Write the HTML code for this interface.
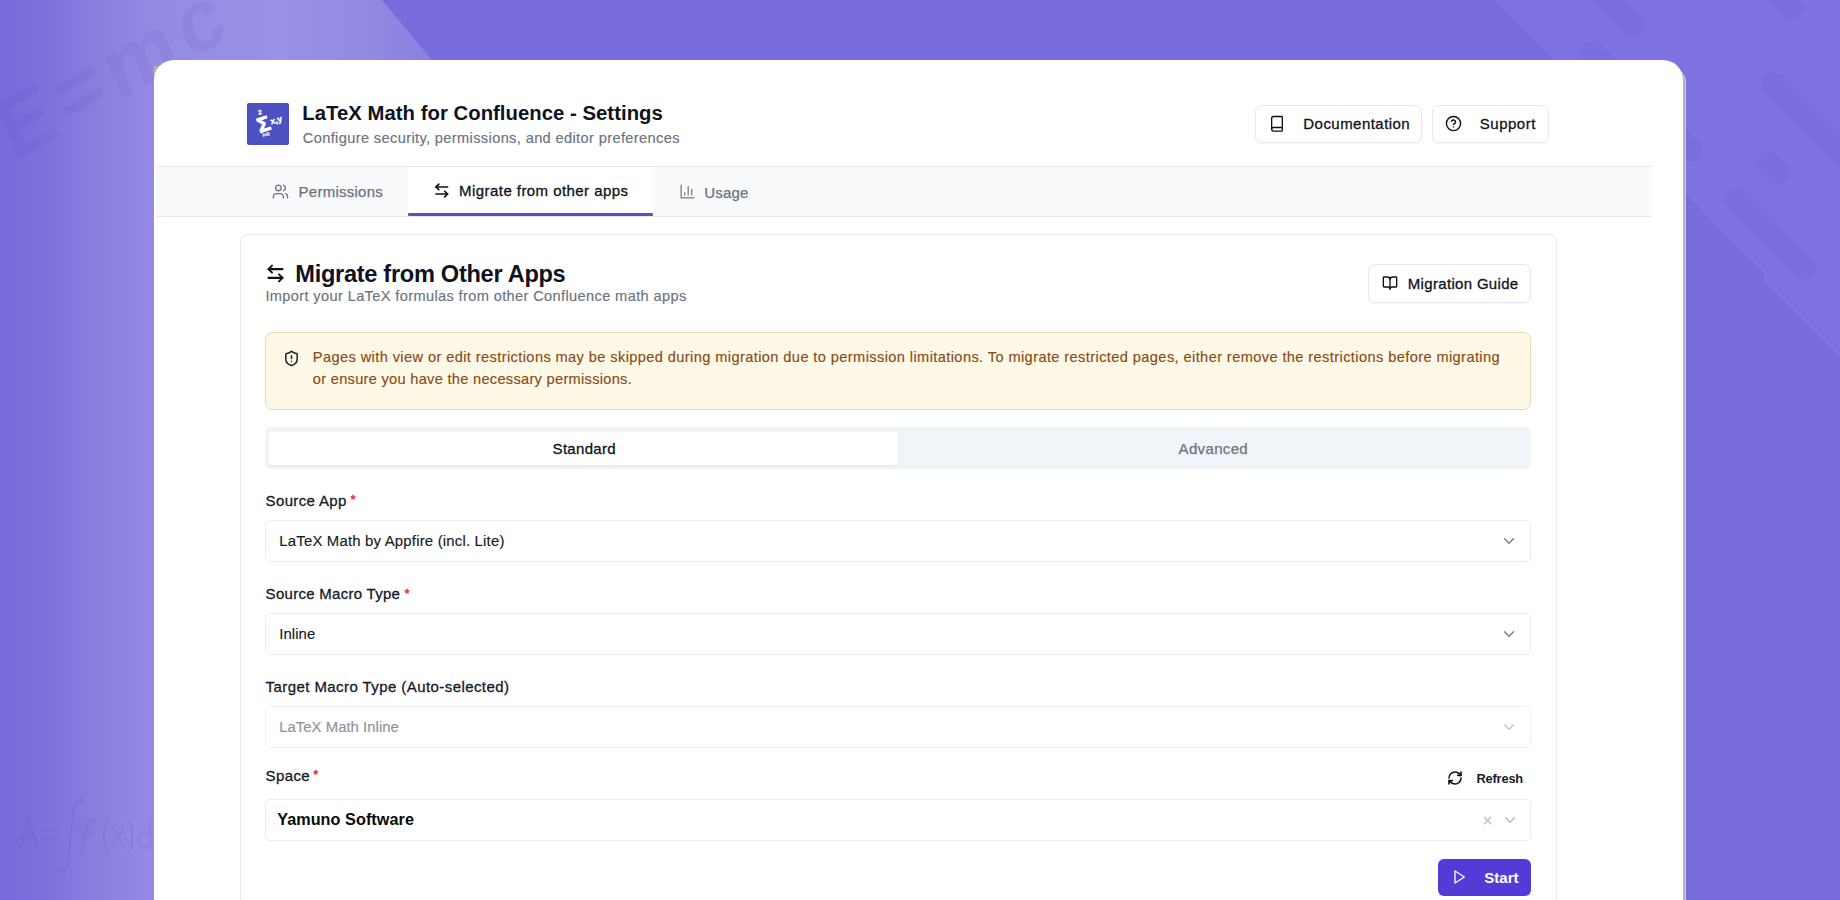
<!DOCTYPE html>
<html><head><meta charset="utf-8"><title>LaTeX Math for Confluence - Settings</title>
<style>
html,body{margin:0;padding:0;width:1840px;height:900px;overflow:hidden}
body{position:relative;background:#786bdb;font-family:"Liberation Sans",sans-serif}
.t{position:absolute;white-space:nowrap}
.ic{position:absolute;fill:none;stroke-linecap:round;stroke-linejoin:round;overflow:visible}
.btn{position:absolute;border:1px solid #e6e8ec;border-radius:7px;box-sizing:border-box;background:#fff;box-shadow:0 1px 1px rgba(0,0,0,0.03)}
.logo{position:absolute;left:247px;top:103px;width:42px;height:42px;background:#4d50c1;border-radius:2px;overflow:hidden}
.card{position:absolute;left:154px;top:60px;width:1529px;height:900px;background:#fff;border-radius:20px}
.edge{position:absolute;left:1680px;top:60px;width:6px;height:900px;border-radius:0 20px 0 0;background:linear-gradient(90deg,#fff 0,#fff 2.5px,#b3b3b6 2.5px,#b3b3b6 4.6px,#c6c2e6 4.6px,#c6c2e6 6px)}
</style></head><body>
<div id="bg" style="position:absolute;left:0;top:0;width:1840px;height:900px;overflow:hidden">
  <div style="position:absolute;left:0;top:0;width:1840px;height:900px;clip-path:polygon(0 0,382px 0,1129px 900px,0 900px);background:linear-gradient(90deg,#786bda 0,#7b6edb 30px,#958ae3 150px,#9a91e6 280px,#9289e2 370px,#8b80df 430px,#897ede 700px)"></div>
  <div style="position:absolute;left:0;top:0;width:1840px;height:900px;clip-path:polygon(1494px 0,1840px 0,1840px 350px);background:#7e73e1"></div>
  <svg style="position:absolute;left:0;top:0" width="1840" height="900" stroke-linecap="round" stroke-width="24" fill="none">
    <g stroke="#7a6ddc">
      <line x1="1560" y1="-50" x2="1634.5" y2="24.5"/>
      <line x1="1592.5" y1="52.5" x2="1690" y2="150"/>
      <line x1="1720" y1="-62" x2="1790" y2="8"/>
      <line x1="1774" y1="84" x2="1900" y2="210"/>
      <line x1="1769" y1="164" x2="1777" y2="172"/>
      <line x1="1738" y1="200" x2="1805" y2="267"/>
    </g>
    <line stroke="#7e73e1" x1="1775" y1="275" x2="1900" y2="400"/>
  </svg>
  <div class="t" style="left:12.6px;top:90.8px;font-size:84px;line-height:84px;font-weight:700;letter-spacing:8px;color:rgba(70,50,170,0.075);transform:rotate(-30deg) skewX(-8deg);transform-origin:0 71.1px">E=mc</div>
  <svg style="position:absolute;left:0;top:780px" width="160" height="110" fill="none" stroke="rgba(80,60,170,0.10)" stroke-width="2.2" stroke-linecap="round">
    <path d="M20 68 L29 38 L38 68 M23.5 57 H34.5"/>
    <path d="M42 50 H58 M42 58 H58"/>
    <path d="M83 22 C78 18 74 24 73 34 L68 80 C67 90 63 94 59 90"/>
    <text x="80" y="24" font-size="10" fill="rgba(80,60,170,0.10)" stroke="none" font-family="Liberation Sans">b</text>
    <text x="60" y="100" font-size="10" fill="rgba(80,60,170,0.10)" stroke="none" font-family="Liberation Sans">a</text>
    <path d="M95 42 C92 38 88 40 87 46 L82 72 M79 52 H92"/>
    <path d="M108 40 C102 48 102 64 108 72"/>
    <path d="M112 48 L124 66 M124 48 L112 66"/>
    <path d="M128 40 C134 48 134 64 128 72"/>
    <path d="M150 38 V68 M150 62 C146 70 138 68 139 60 C139 52 146 50 150 56"/>
  </svg>
</div>
<div class="card" style="width:1532px;top:68px;border-radius:0 14px 0 0;background:#c6c2e6"></div>
<div class="card" style="width:1530.6px;top:66px;border-radius:0 16px 0 0;background:#b3b3b6"></div>
<div class="card" style="width:1528.5px;background:#fff"></div>
<div class="logo"><svg width="42" height="42" viewBox="0 0 42 42"><g fill="#fff" stroke="#fff" font-family="Liberation Sans" font-weight="700" transform="translate(-1 -3.5)"><text x="10.5" y="31" font-size="21" stroke-width="0.9" transform="rotate(-18 20 22)">&#931;</text><text x="12" y="15" font-size="6.5" stroke-width="0.3" transform="rotate(-10 14 12)">2</text><text x="24" y="24" font-size="8.5" stroke-width="0.4" transform="rotate(-15 28 20)">x,y</text><text x="16.5" y="37" font-size="5" stroke-width="0.2" transform="rotate(-15 19 35)">i=0</text></g></svg></div>
<div class="t" style="left:302.30px;top:103.12px;font-size:20.3px;line-height:20.3px;font-weight:700;color:#0f1222;letter-spacing:0.040px;">LaTeX Math for Confluence - Settings</div>
<div class="t" style="left:302.80px;top:130.94px;font-size:14.6px;line-height:14.6px;font-weight:400;color:#6b7280;letter-spacing:0.371px;-webkit-text-stroke:0.15px #6b7280;">Configure security, permissions, and editor preferences</div>
<div class="btn" style="left:1255px;top:105px;width:167px;height:38px"></div>
<svg class="ic" style="left:1268.9px;top:114.6px" width="16" height="17.6" viewBox="0 0 24 24" preserveAspectRatio="none" stroke="#111" stroke-width="2.0"><path d="M4 19.5v-15A2.5 2.5 0 0 1 6.5 2H19a1 1 0 0 1 1 1v18a1 1 0 0 1-1 1H6.5a1 1 0 0 1 0-5H20"/></svg>
<div class="t" style="left:1303.30px;top:115.80px;font-size:15.0px;line-height:15.0px;font-weight:400;color:#0f1222;letter-spacing:0.459px;-webkit-text-stroke:0.3px #0f1222;">Documentation</div>
<div class="btn" style="left:1432px;top:105px;width:117px;height:38px"></div>
<svg class="ic" style="left:1445.1px;top:115px" width="17" height="17" viewBox="0 0 24 24" stroke="#111" stroke-width="2"><circle cx="12" cy="12" r="10"/><path d="M9.09 9a3 3 0 0 1 5.83 1c0 2-3 3-3 3"/><path d="M12 17h.01"/></svg>
<div class="t" style="left:1479.80px;top:115.80px;font-size:15.0px;line-height:15.0px;font-weight:400;color:#0f1222;letter-spacing:0.510px;-webkit-text-stroke:0.3px #0f1222;">Support</div>
<div style="position:absolute;left:156px;top:166px;width:1496px;height:51px;background:#f9fafb;border-top:1px solid #e7e8eb;border-bottom:1px solid #e7e8eb;box-sizing:border-box"></div>
<div style="position:absolute;left:408px;top:167px;width:245px;height:46px;background:#fff"></div>
<div style="position:absolute;left:408px;top:213px;width:245px;height:3px;background:#5a4fc8;border-radius:1px"></div>
<svg class="ic" style="left:271.8px;top:182.7px" width="17" height="17" viewBox="0 0 24 24" stroke="#6b7280" stroke-width="1.9"><path d="M16 21v-2a4 4 0 0 0-4-4H6a4 4 0 0 0-4 4v2"/><circle cx="9" cy="7" r="4"/><path d="M22 21v-2a4 4 0 0 0-3-3.87"/><path d="M16 3.13a4 4 0 0 1 0 7.75"/></svg>
<div class="t" style="left:298.60px;top:183.80px;font-size:15.0px;line-height:15.0px;font-weight:400;color:#6b7280;letter-spacing:0.251px;-webkit-text-stroke:0.25px #6b7280;">Permissions</div>
<svg class="ic" style="left:433.3px;top:182.2px" width="17.5" height="17" viewBox="0 0 24 24" preserveAspectRatio="none" stroke="#111" stroke-width="2.3"><path d="M8 3 4 7l4 4"/><path d="M4 7h16"/><path d="m16 21 4-4-4-4"/><path d="M20 17H4"/></svg>
<div class="t" style="left:459.10px;top:183.40px;font-size:15.0px;line-height:15.0px;font-weight:400;color:#0f1222;letter-spacing:0.439px;-webkit-text-stroke:0.3px #0f1222;">Migrate from other apps</div>
<svg class="ic" style="left:678.5px;top:182.6px" width="17" height="17" viewBox="0 0 24 24" stroke="#707680" stroke-width="1.7"><path d="M3 3v18h18"/><path d="M18 17V9"/><path d="M13 17V5"/><path d="M8 17v-3"/></svg>
<div class="t" style="left:704.20px;top:184.50px;font-size:15.0px;line-height:15.0px;font-weight:400;color:#6b7280;letter-spacing:0.210px;-webkit-text-stroke:0.25px #6b7280;">Usage</div>
<div style="position:absolute;left:240px;top:234px;width:1317px;height:720px;border:1px solid #e9eaec;border-radius:8px;box-sizing:border-box;background:#fff"></div>
<svg class="ic" style="left:264.6px;top:262.6px" width="21" height="21" viewBox="0 0 24 24" stroke="#111" stroke-width="2.3"><path d="M8 3 4 7l4 4"/><path d="M4 7h16"/><path d="m16 21 4-4-4-4"/><path d="M20 17H4"/></svg>
<div class="t" style="left:295.30px;top:262.62px;font-size:23.6px;line-height:23.6px;font-weight:700;color:#0f1222;letter-spacing:-0.314px;letter-spacing:-0.3px">Migrate from Other Apps</div>
<div class="t" style="left:265.40px;top:289.24px;font-size:14.6px;line-height:14.6px;font-weight:400;color:#6b7280;letter-spacing:0.367px;-webkit-text-stroke:0.15px #6b7280;">Import your LaTeX formulas from other Confluence math apps</div>
<div class="btn" style="left:1368px;top:264px;width:163px;height:39px"></div>
<svg class="ic" style="left:1381.5px;top:275px" width="16" height="16" viewBox="0 0 24 24" stroke="#111" stroke-width="2"><path d="M12 7v14"/><path d="M3 18a1 1 0 0 1-1-1V4a1 1 0 0 1 1-1h5a4 4 0 0 1 4 4 4 4 0 0 1 4-4h5a1 1 0 0 1 1 1v13a1 1 0 0 1-1 1h-6a3 3 0 0 0-3 3 3 3 0 0 0-3-3z"/></svg>
<div class="t" style="left:1407.80px;top:275.70px;font-size:15.0px;line-height:15.0px;font-weight:400;color:#0f1222;letter-spacing:0.322px;-webkit-text-stroke:0.3px #0f1222;">Migration Guide</div>
<div style="position:absolute;left:265px;top:332px;width:1266px;height:78px;background:#fdf9e6;border:1px solid #e6dcb0;border-radius:7px;box-sizing:border-box"></div>
<svg class="ic" style="left:282.6px;top:350.4px" width="17" height="17" viewBox="0 0 24 24" stroke="#1f1f1f" stroke-width="2.1"><path d="M20 13c0 5-3.5 7.5-7.66 8.95a1 1 0 0 1-.67-.01C7.5 20.5 4 18 4 13V6a1 1 0 0 1 1-1c2 0 4.5-1.2 6.24-2.72a1.17 1.17 0 0 1 1.52 0C14.51 3.81 17 5 19 5a1 1 0 0 1 1 1z"/><path d="M12 8v4"/><path d="M12 16h.01"/></svg>
<div class="t" style="left:312.80px;top:350.04px;font-size:14.6px;line-height:14.6px;font-weight:400;color:#8a4a16;letter-spacing:0.401px;-webkit-text-stroke:0.15px #8a4a16;">Pages with view or edit restrictions may be skipped during migration due to permission limitations. To migrate restricted pages, either remove the restrictions before migrating</div>
<div class="t" style="left:312.80px;top:371.74px;font-size:14.6px;line-height:14.6px;font-weight:400;color:#8a4a16;letter-spacing:0.299px;-webkit-text-stroke:0.15px #8a4a16;">or ensure you have the necessary permissions.</div>
<div style="position:absolute;left:265px;top:427px;width:1266px;height:42px;background:#f1f4f8;border-radius:5px"></div>
<div style="position:absolute;left:269px;top:432px;width:629px;height:33px;background:#fff;border-radius:3px;box-shadow:0 1px 2px rgba(0,0,0,0.05)"></div>
<div class="t" style="left:552.60px;top:441.40px;font-size:15.0px;line-height:15.0px;font-weight:400;color:#0f1222;letter-spacing:0.303px;-webkit-text-stroke:0.3px #0f1222;">Standard</div>
<div class="t" style="left:1178.60px;top:441.40px;font-size:15.0px;line-height:15.0px;font-weight:400;color:#6b7280;letter-spacing:0.340px;-webkit-text-stroke:0.25px #6b7280;">Advanced</div>
<div class="t" style="left:265.60px;top:492.60px;font-size:15.0px;line-height:15.0px;font-weight:400;color:#161a26;letter-spacing:0.360px;-webkit-text-stroke:0.3px #161a26;">Source App</div>
<div class="t" style="left:350.5px;top:493.3px;font-size:13px;line-height:13px;color:#dc2f3a;font-weight:400;-webkit-text-stroke:0.4px #dc2f3a">*</div>
<div style="position:absolute;left:265px;top:520px;width:1266px;height:42px;border:1px solid #ececee;border-radius:5px;box-sizing:border-box;background:#fff"></div>
<div class="t" style="left:279.30px;top:533.99px;font-size:14.9px;line-height:14.9px;font-weight:400;color:#161a26;letter-spacing:0.199px;-webkit-text-stroke:0.15px #161a26;">LaTeX Math by Appfire (incl. Lite)</div>
<svg class="ic" style="left:1500.0px;top:531.5px" width="18" height="18" viewBox="0 0 24 24" stroke="#7d7f84" stroke-width="1.9"><path d="m6 9 6 6 6-6"/></svg>
<div class="t" style="left:265.60px;top:585.80px;font-size:15.0px;line-height:15.0px;font-weight:400;color:#161a26;letter-spacing:0.282px;-webkit-text-stroke:0.3px #161a26;">Source Macro Type</div>
<div class="t" style="left:404.5px;top:586.5px;font-size:13px;line-height:13px;color:#dc2f3a;font-weight:400;-webkit-text-stroke:0.4px #dc2f3a">*</div>
<div style="position:absolute;left:265px;top:613px;width:1266px;height:42px;border:1px solid #ececee;border-radius:5px;box-sizing:border-box;background:#fff"></div>
<div class="t" style="left:279.20px;top:626.89px;font-size:14.9px;line-height:14.9px;font-weight:400;color:#161a26;letter-spacing:0.096px;-webkit-text-stroke:0.15px #161a26;">Inline</div>
<svg class="ic" style="left:1500.0px;top:624.5px" width="18" height="18" viewBox="0 0 24 24" stroke="#7d7f84" stroke-width="1.9"><path d="m6 9 6 6 6-6"/></svg>
<div class="t" style="left:265.60px;top:678.80px;font-size:15.0px;line-height:15.0px;font-weight:400;color:#161a26;letter-spacing:0.424px;-webkit-text-stroke:0.3px #161a26;">Target Macro Type (Auto-selected)</div>
<div style="position:absolute;left:265px;top:706px;width:1266px;height:42px;border:1px solid #f0f1f2;border-radius:5px;box-sizing:border-box;background:#fff"></div>
<div class="t" style="left:279.20px;top:719.99px;font-size:14.9px;line-height:14.9px;font-weight:400;color:#909398;letter-spacing:0.027px;-webkit-text-stroke:0.15px #909398;">LaTeX Math Inline</div>
<svg class="ic" style="left:1500.0px;top:717.5px" width="18" height="18" viewBox="0 0 24 24" stroke="#c4c7cc" stroke-width="1.9"><path d="m6 9 6 6 6-6"/></svg>
<div class="t" style="left:265.60px;top:767.60px;font-size:15.0px;line-height:15.0px;font-weight:400;color:#161a26;letter-spacing:0.392px;-webkit-text-stroke:0.3px #161a26;">Space</div>
<div class="t" style="left:313.3px;top:768.3px;font-size:13px;line-height:13px;color:#dc2f3a;font-weight:400;-webkit-text-stroke:0.4px #dc2f3a">*</div>
<svg class="ic" style="left:1446.7px;top:770.2px" width="16" height="16" viewBox="0 0 24 24" stroke="#111" stroke-width="2.4"><path d="M3 12a9 9 0 0 1 9-9 9.75 9.75 0 0 1 6.74 2.74L21 8"/><path d="M21 3v5h-5"/><path d="M21 12a9 9 0 0 1-9 9 9.75 9.75 0 0 1-6.74-2.74L3 16"/><path d="M8 16H3v5"/></svg>
<div class="t" style="left:1476.40px;top:773.36px;font-size:12.8px;line-height:12.8px;font-weight:700;color:#161a26;letter-spacing:-0.144px;">Refresh</div>
<div style="position:absolute;left:265px;top:799px;width:1266px;height:42px;border:1px solid #ececee;border-radius:5px;box-sizing:border-box;background:#fff"></div>
<div class="t" style="left:277.20px;top:811.39px;font-size:16.2px;line-height:16.2px;font-weight:700;color:#0a0a0a;letter-spacing:0.062px;">Yamuno Software</div>
<svg class="ic" style="left:1480.5px;top:814.2px" width="13" height="13" viewBox="0 0 24 24" stroke="#b8b8b8" stroke-width="2.2"><path d="M18 6 6 18"/><path d="m6 6 12 12"/></svg>
<svg class="ic" style="left:1501.0px;top:811.0px" width="18" height="18" viewBox="0 0 24 24" stroke="#b8b8b8" stroke-width="1.9"><path d="m6 9 6 6 6-6"/></svg>
<div style="position:absolute;left:1438px;top:859px;width:93px;height:37px;background:#543bd7;border-radius:6px"></div>
<svg class="ic" style="left:1450.5px;top:869.3px" width="16" height="16" viewBox="0 0 24 24" stroke="#fff" stroke-width="2"><polygon points="6 3 20 12 6 21 6 3"/></svg>
<div class="t" style="left:1484.20px;top:870.40px;font-size:15.0px;line-height:15.0px;font-weight:700;color:#ffffff;letter-spacing:0.056px;">Start</div>

</body></html>
